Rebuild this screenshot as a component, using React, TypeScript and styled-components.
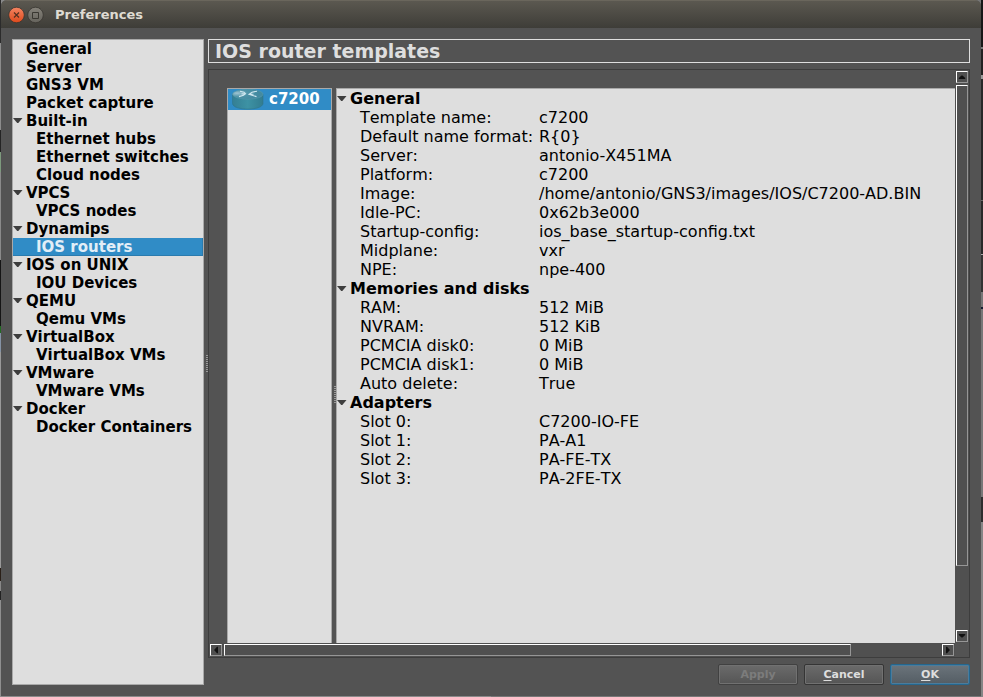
import React from "react";
import styled, { createGlobalStyle, css } from "styled-components";

const Global = createGlobalStyle`
  * { box-sizing: border-box; }
  html, body { margin: 0; padding: 0; overflow: hidden; background: #6b6b6b; }
  body { font-family: "DejaVu Sans", sans-serif; font-kerning: none; color: #000; }
`;

const Desktop = styled.div`
  width: 983px;
  height: 697px;
  display: flex;
  background: linear-gradient(90deg, #8a8a8a 0 50%, #777 50%);
`;

const LeftEdge = styled.div`
  width: 1px;
  background: linear-gradient(180deg, #2b2b2b 0 43px, #8c8c8c 43px 130px, #242424 130px 152px, #7d9a7d 152px 172px, #8a8a8a 172px 260px, #151515 260px 326px, #236b23 326px 333px, #8593a5 333px 352px, #999 352px 568px, #2a2018 568px 581px, #888 581px 591px, #222 591px 600px, #8f8f8f 600px);
`;

const RightEdge = styled.div`
  width: 2px;
  background: linear-gradient(180deg, #171717 0 47px, #777 47px 49px, #222 49px 75px, #999 75px 79px, #282828 79px 200px, #666 200px 201px, #292929 201px 254px, #aaa 254px 255px, #333 255px 292px, #777 292px 307px, #161c30 307px 309px, #777 309px 497px, #2d2d2d 497px 522px, #858585 522px);
`;

const Window = styled.div`
  flex: 1;
  height: 696px;
  display: flex;
  flex-direction: column;
  border-radius: 6px 6px 0 0;
  background: #535353;
  overflow: hidden;
`;

const TitleBar = styled.header`
  height: 28px;
  padding-left: 7px;
  display: flex;
  align-items: center;
  gap: 2px;
  background: linear-gradient(#5b5850, #3e3d38);
  border-top: 1px solid #6a665c;
`;

const Caption = styled.span`
  margin-left: 9px;
  font-size: 13px;
  font-weight: bold;
  line-height: 27px;
  color: #dfdbd2;
`;

const Body = styled.div`
  height: 646px;
  margin: 11px 11px 0;
  display: flex;
`;

const Sidebar = styled.nav`
  width: 192px;
  border: 1px solid #a9a9a9;
  background: #dedede;
`;

const NavRow = styled.div<{ $child?: boolean; $selected?: boolean }>`
  height: 18px;
  display: flex;
  align-items: center;
  font-size: 15px;
  line-height: 18px;
  font-weight: bold;
  white-space: nowrap;
  padding-left: ${(p) => (p.$child ? 10 : 0)}px;
  ${(p) =>
    p.$selected &&
    css`
      color: #e2eef7;
      background: #308cc6;
      box-shadow: inset 0 -1px #2a7bae, inset -1px 0 #2a7bae;
    `}
`;

const ArrowCell = styled.span`
  width: 13px;
  flex: none;
  display: flex;
`;

const Splitter = styled.div<{ $side: "left" | "right" }>`
  width: 4px;
  padding-top: ${(p) => (p.$side === "left" ? 2 : 58)}px;
  padding-right: ${(p) => (p.$side === "left" ? 0 : 0)}px;
  display: flex;
  justify-content: flex-end;
  align-items: center;
`;

const Grip = styled.span`
  width: 2px;
  height: 17px;
  background: repeating-linear-gradient(#999 0 1px, #535353 1px 2px);
`;

const Main = styled.main`
  width: 762px;
  display: flex;
  flex-direction: column;
`;

const Heading = styled.h1`
  margin: 0;
  height: 24px;
  padding-left: 6px;
  border: 1px solid #dedede;
  font-size: 19px;
  line-height: 23px;
  color: #dedede;
`;

const Frame = styled.section`
  height: 589px;
  margin-top: 6px;
  border: 1px solid #3d3d3d;
  display: grid;
  grid-template-columns: 746px 14px;
  grid-template-rows: 573px 14px;
`;

const Viewport = styled.div`
  padding: 18px 0 0 18px;
  display: flex;
`;

const Templates = styled.div`
  width: 105px;
  border: 1px solid #a9a9a9;
  border-bottom: 0;
  background: #dedede;
`;

const Template = styled.div`
  height: 21px;
  padding-left: 4px;
  display: flex;
  align-items: flex-start;
  gap: 5px;
  background: #308cc6;
  color: #fff;
  font-size: 15px;
  font-weight: bold;
  line-height: 20px;
`;

const Details = styled.div`
  width: 619px;
  border: 1px solid #a9a9a9;
  border-bottom: 0;
  border-right: 0;
  background: #dedede;
`;

const DetailRow = styled.div`
  height: 19px;
  display: flex;
  font-size: 16px;
  line-height: 19px;
  white-space: nowrap;
`;

const GroupRow = styled(DetailRow)`
  align-items: center;
  font-weight: bold;
`;

const Key = styled.span`
  width: 202px;
  padding-left: 23px;
`;

const Bar = styled.div<{ $vertical?: boolean }>`
  display: flex;
  flex-direction: ${(p) => (p.$vertical ? "column" : "row")};
  padding: 1px;
  gap: 2px;
  background: #505050;
`;

const bevel = css`
  border: 1px solid #969696;
  border-top-color: #fff;
  border-left-color: #fff;
`;

const ArrowButton = styled.span<{ $end?: boolean; $vertical?: boolean }>`
  ${bevel}
  flex: none;
  width: 12px;
  height: 12px;
  display: flex;
  align-items: center;
  justify-content: center;
  ${(p) => p.$end && (p.$vertical ? "margin-top: auto;" : "margin-left: auto;")}
`;

const Thumb = styled.span<{ $length: number; $vertical?: boolean }>`
  ${bevel}
  flex: none;
  ${(p) => (p.$vertical ? `height: ${p.$length}px;` : `width: ${p.$length}px;`)}
`;

const Footer = styled.footer`
  margin-top: 6px;
  display: flex;
  justify-content: flex-end;
  gap: 6px;
`;

const Button = styled.button<{ $tone?: "off" | "primary" }>`
  width: 80px;
  height: 21px;
  padding: 0;
  border: 1px solid #353535;
  border-radius: 2px;
  background: linear-gradient(#6b6b6b, #555);
  box-shadow: inset 0 0 0 1px #717171;
  color: #dedede;
  font: bold 11px/19px "DejaVu Sans", sans-serif;
  text-underline-offset: 2px;
  ${(p) => p.$tone === "off" && "color: #7c7c7c; border-color: #414141;"}
  ${(p) =>
    p.$tone === "primary" &&
    "border-color: #24678f; background: linear-gradient(#6b747b, #545d64); box-shadow: inset 0 0 0 1px #4a7c9c;"}
`;

const TreeArrow = () => (
  <ArrowCell>
    <svg width="10" height="6" viewBox="0 0 10 6">
      <path d="M0 0H9.500L5.300 5H4.200Z" fill="#3e3e3e" />
    </svg>
  </ArrowCell>
);

const turns = { up: 0, right: 90, down: 180, left: 270 };
const Chevron = ({ dir }: { dir: keyof typeof turns }) => (
  <svg width="8" height="8" viewBox="0 0 8 8">
    <path d="M.8 6V5L3.500 2.500H4.500L7.200 5V6Z" fill="#111" transform={`rotate(${turns[dir]} 4 4)`} />
  </svg>
);

const WindowButton = ({ kind }: { kind: "close" | "max" }) => (
  <svg width="17" height="18" viewBox="0 0 17 18">
    <defs>
      <linearGradient id={kind} x2="0" y2="1">
        <stop stopColor={kind === "close" ? "#f58562" : "#85827a"} />
        <stop offset="1" stopColor={kind === "close" ? "#dd491b" : "#65635c"} />
      </linearGradient>
    </defs>
    <circle cx="8.5" cy="9" r="7.8" fill={`url(#${kind})`} stroke="#373530" strokeWidth=".8" />
    {kind === "close" ? (
      <path d="M6 6.500 11 11.500M11 6.500 6 11.500" stroke="#55301f" strokeWidth="1.2" />
    ) : (
      <path d="M5.500 6.500h6v6h-6z" fill="none" stroke="#393731" />
    )}
  </svg>
);

const RouterIcon = () => (
  <svg width="32" height="21" viewBox="0 0 32 21">
    <defs>
      <linearGradient id="side"><stop stopColor="#347f94" /><stop offset=".5" stopColor="#3d92a4" /><stop offset="1" stopColor="#327c8f" /></linearGradient>
      <radialGradient id="lid" cx=".15" cy=".4" r=".7"><stop stopColor="#9fc4d2" /><stop offset=".5" stopColor="#4e93a7" /><stop offset="1" stopColor="#438aa0" /></radialGradient>
    </defs>
    <path d="M.5 5V14.500C1 22 30.500 22 31 14.500V5Z" fill="url(#side)" stroke="#2f7689" strokeWidth=".6" />
    <ellipse cx="15.800" cy="5.200" rx="15.200" ry="5" fill="url(#lid)" stroke="#5798a9" strokeWidth=".6" />
    <path d="M8 2.300 12 3.200 13.500 4.600 11.500 6.200 7 7.600M25 2.200 20 3.200 17 5.300 20 6.300 24.500 7.600M9.500 4.900H13M18 5.300H21.500" fill="none" stroke="#cfe7ef" strokeWidth="1.1" />
  </svg>
);

const nav: { name: string; children?: string[] }[] = [
  { name: "General" },
  { name: "Server" },
  { name: "GNS3 VM" },
  { name: "Packet capture" },
  { name: "Built-in", children: ["Ethernet hubs", "Ethernet switches", "Cloud nodes"] },
  { name: "VPCS", children: ["VPCS nodes"] },
  { name: "Dynamips", children: ["IOS routers"] },
  { name: "IOS on UNIX", children: ["IOU Devices"] },
  { name: "QEMU", children: ["Qemu VMs"] },
  { name: "VirtualBox", children: ["VirtualBox VMs"] },
  { name: "VMware", children: ["VMware VMs"] },
  { name: "Docker", children: ["Docker Containers"] },
];

const groups: { title: string; rows: [string, string][] }[] = [
  {
    title: "General",
    rows: [
      ["Template name:", "c7200"],
      ["Default name format:", "R{0}"],
      ["Server:", "antonio-X451MA"],
      ["Platform:", "c7200"],
      ["Image:", "/home/antonio/GNS3/images/IOS/C7200-AD.BIN"],
      ["Idle-PC:", "0x62b3e000"],
      ["Startup-config:", "ios_base_startup-config.txt"],
      ["Midplane:", "vxr"],
      ["NPE:", "npe-400"],
    ],
  },
  {
    title: "Memories and disks",
    rows: [
      ["RAM:", "512 MiB"],
      ["NVRAM:", "512 KiB"],
      ["PCMCIA disk0:", "0 MiB"],
      ["PCMCIA disk1:", "0 MiB"],
      ["Auto delete:", "True"],
    ],
  },
  {
    title: "Adapters",
    rows: [
      ["Slot 0:", "C7200-IO-FE"],
      ["Slot 1:", "PA-A1"],
      ["Slot 2:", "PA-FE-TX"],
      ["Slot 3:", "PA-2FE-TX"],
    ],
  },
];

export default function App() {
  return (
    <>
      <Global />
      <Desktop>
        <LeftEdge />
        <Window>
          <TitleBar>
            <WindowButton kind="close" />
            <WindowButton kind="max" />
            <Caption>Preferences</Caption>
          </TitleBar>
          <Body>
            <Sidebar>
              {nav.map((item) => (
                <React.Fragment key={item.name}>
                  <NavRow>
                    {item.children ? <TreeArrow /> : <ArrowCell />}
                    {item.name}
                  </NavRow>
                  {item.children?.map((child) => (
                    <NavRow key={child} $child $selected={child === "IOS routers"}>
                      <ArrowCell />
                      {child}
                    </NavRow>
                  ))}
                </React.Fragment>
              ))}
            </Sidebar>
            <Splitter $side="left"><Grip /></Splitter>
            <Main>
              <Heading>IOS router templates</Heading>
              <Frame>
                <Viewport>
                  <Templates>
                    <Template><RouterIcon />c7200</Template>
                  </Templates>
                  <Splitter $side="right"><Grip /></Splitter>
                  <Details>
                    {groups.map((group) => (
                      <React.Fragment key={group.title}>
                        <GroupRow><TreeArrow />{group.title}</GroupRow>
                        {group.rows.map(([key, value]) => (
                          <DetailRow key={key}><Key>{key}</Key>{value}</DetailRow>
                        ))}
                      </React.Fragment>
                    ))}
                  </Details>
                </Viewport>
                <Bar $vertical>
                  <ArrowButton $vertical><Chevron dir="up" /></ArrowButton>
                  <Thumb $vertical $length={481} />
                  <ArrowButton $vertical $end><Chevron dir="down" /></ArrowButton>
                </Bar>
                <Bar>
                  <ArrowButton><Chevron dir="left" /></ArrowButton>
                  <Thumb $length={627} />
                  <ArrowButton $end><Chevron dir="right" /></ArrowButton>
                </Bar>
              </Frame>
              <Footer>
                <Button $tone="off">Apply</Button>
                <Button><u>C</u>ancel</Button>
                <Button $tone="primary"><u>O</u>K</Button>
              </Footer>
            </Main>
          </Body>
        </Window>
        <RightEdge />
      </Desktop>
    </>
  );
}
